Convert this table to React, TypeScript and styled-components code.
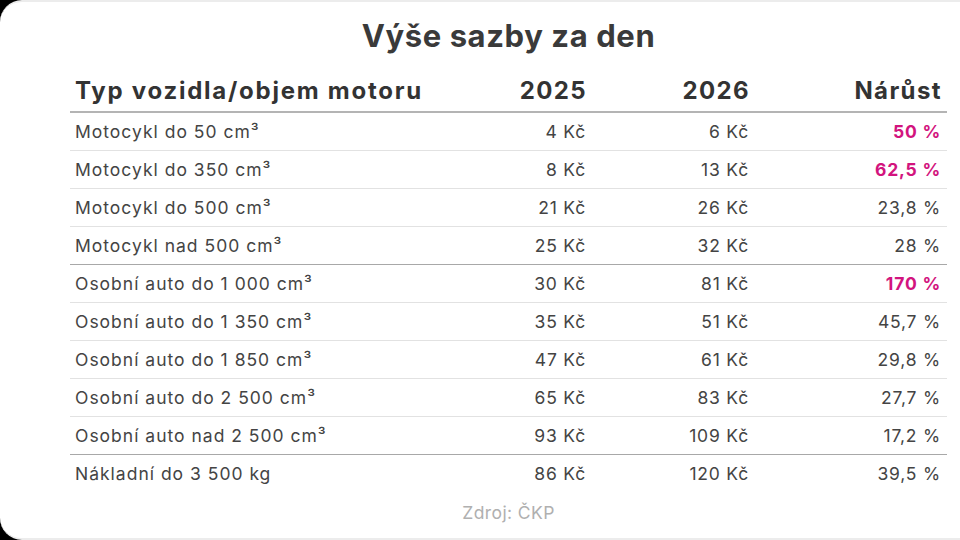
import React from "react";
import styled, { createGlobalStyle } from "styled-components";

const Global = createGlobalStyle`
  html, body { margin: 0; padding: 0; background: #000; }
  body { width: 960px; height: 540px; overflow: hidden; }
`;

const Card = styled.div`
  box-sizing: border-box;
  width: 960px;
  height: 540px;
  background: #fff;
  border-top: 2px solid #ececec;
  border-bottom: 2px solid #ececec;
  border-radius: 22px 0 0 22px;
  padding: 16px 13px 0 70px;
  display: flex;
  flex-direction: column;
  font-family: Inter, "Noto Sans", sans-serif;
  color: #3d3d3d;
`;

const Title = styled.h1`
  margin: 0;
  font-size: 31px;
  line-height: 36px;
  font-weight: 700;
  letter-spacing: 0.6px;
  text-align: center;
  color: #3a3a3a;
`;

const Grid = styled.div`
  display: grid;
  grid-template-columns: 360px 162px 163px 192px;
  margin-top: 22px;
`;

const HeadCell = styled.div<{ $right?: boolean }>`
  height: 30px;
  line-height: 30px;
  padding: 0 ${(p) => (p.$right ? "5px" : "7px")} 5px 5px;
  font-size: 24px;
  font-weight: 700;
  letter-spacing: ${(p) => (p.$right ? "1.4px" : "1.75px")};
  color: #333;
  text-align: ${(p) => (p.$right ? "right" : "left")};
  border-bottom: 2px solid #b4b4b4;
`;

const Cell = styled.div<{ $right?: boolean; $hot?: boolean; $line?: "none" | "light" | "dark" }>`
  height: 37px;
  line-height: 37px;
  padding: 0 ${(p) => (p.$right ? "6px" : "7px")} 0 5px;
  font-size: 17.5px;
  letter-spacing: ${(p) => (p.$right ? "0.8px" : "1px")};
  font-weight: ${(p) => (p.$hot ? 700 : 400)};
  color: ${(p) => (p.$hot ? "#d2147e" : "#444")};
  text-align: ${(p) => (p.$right ? "right" : "left")};
  border-bottom: 1px solid
    ${(p) => (p.$line === "dark" ? "#a8a8a8" : p.$line === "none" ? "transparent" : "#e2e2e2")};
  white-space: nowrap;
`;

const Source = styled.div`
  margin-top: 8px;
  font-size: 17.5px;
  line-height: 24px;
  letter-spacing: 0.4px;
  text-align: center;
  color: #b0b0b0;
`;

type Row = { name: string; a: string; b: string; c: string; hot?: boolean };

const rows: Row[] = [
  { name: "Motocykl do 50 cm³", a: "4 Kč", b: "6 Kč", c: "50 %", hot: true },
  { name: "Motocykl do 350 cm³", a: "8 Kč", b: "13 Kč", c: "62,5 %", hot: true },
  { name: "Motocykl do 500 cm³", a: "21 Kč", b: "26 Kč", c: "23,8 %" },
  { name: "Motocykl nad 500 cm³", a: "25 Kč", b: "32 Kč", c: "28 %" },
  { name: "Osobní auto do 1 000 cm³", a: "30 Kč", b: "81 Kč", c: "170 %", hot: true },
  { name: "Osobní auto do 1 350 cm³", a: "35 Kč", b: "51 Kč", c: "45,7 %" },
  { name: "Osobní auto do 1 850 cm³", a: "47 Kč", b: "61 Kč", c: "29,8 %" },
  { name: "Osobní auto do 2 500 cm³", a: "65 Kč", b: "83 Kč", c: "27,7 %" },
  { name: "Osobní auto nad 2 500 cm³", a: "93 Kč", b: "109 Kč", c: "17,2 %" },
  { name: "Nákladní do 3 500 kg", a: "86 Kč", b: "120 Kč", c: "39,5 %" },
];

export default function App() {
  return (
    <>
      <Global />
      <Card>
        <Title>Výše sazby za den</Title>
        <Grid>
          <HeadCell>Typ vozidla/objem motoru</HeadCell>
          <HeadCell $right>2025</HeadCell>
          <HeadCell $right>2026</HeadCell>
          <HeadCell $right>Nárůst</HeadCell>
          {rows.map((r, i) => {
            const line = i === rows.length - 1 ? "none" : i === 3 || i === 8 ? "dark" : "light";
            return (
              <React.Fragment key={r.name}>
                <Cell $line={line}>{r.name}</Cell>
                <Cell $line={line} $right>{r.a}</Cell>
                <Cell $line={line} $right>{r.b}</Cell>
                <Cell $line={line} $right $hot={r.hot}>{r.c}</Cell>
              </React.Fragment>
            );
          })}
        </Grid>
        <Source>Zdroj: ČKP</Source>
      </Card>
    </>
  );
}
